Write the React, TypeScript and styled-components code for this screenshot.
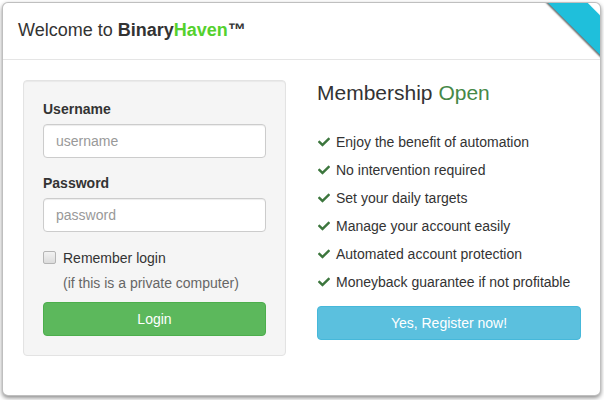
import React from "react";
import styled, { createGlobalStyle } from "styled-components";
import { FaCheck } from "react-icons/fa";

const Global = createGlobalStyle`
  html, body { margin: 0; padding: 0; background: #fff; }
  body { font-family: "Liberation Sans", Arial, sans-serif; font-size: 14px; line-height: 1.42857; color: #333; }
  * { box-sizing: border-box; }
`;

const Page = styled.div`
  padding: 2px 3px 0 2px;
  width: 604px;
  height: 400px;
`;

const Modal = styled.div`
  position: relative;
  width: 599px;
  height: 394px;
  background: #fff;
  border: 1px solid rgba(0, 0, 0, 0.25);
  border-radius: 6px;
  box-shadow: 0 2px 4px rgba(0, 0, 0, 0.45);
`;

const Corner = styled.div`
  position: absolute;
  top: 0;
  right: 0;
  width: 56px;
  height: 56px;
  overflow: hidden;
  border-top-right-radius: 5px;
`;

const Ribbon = styled.div`
  position: absolute;
  left: -10px;
  top: 2px;
  width: 100px;
  height: 28px;
  background: #1fbfdb;
  transform: rotate(45deg);
  box-shadow: 0 1.5px 1.5px rgba(0, 0, 0, 0.55);
`;

const Header = styled.div`
  padding: 15px;
  border-bottom: 1px solid #e5e5e5;
`;

const Title = styled.h4`
  margin: 0;
  font-size: 18px;
  font-weight: normal;
  line-height: 1.42857;
  color: #333;
`;

const Brand = styled.b<{ $green?: boolean }>`
  font-weight: bold;
  color: ${(p) => (p.$green ? "#55d12e" : "#333")};
`;

const Body = styled.div`
  display: grid;
  grid-template-columns: 263px 264px;
  column-gap: 31px;
  align-items: start;
  padding: 20px 19px 20px 20px;
`;

const Well = styled.form`
  background: #f5f5f5;
  border: 1px solid #e3e3e3;
  border-radius: 4px;
  padding: 19px;
  box-shadow: inset 0 1px 1px rgba(0, 0, 0, 0.05);
`;

const Group = styled.div`
  margin-bottom: 16px;
`;

const Label = styled.label`
  display: inline-block;
  margin-bottom: 4px;
  font-weight: bold;
  color: #333;
`;

const Input = styled.input`
  display: block;
  width: 100%;
  height: 34px;
  padding: 6px 12px;
  font-family: inherit;
  font-size: 14px;
  color: #555;
  background: #fff;
  border: 1px solid #ccc;
  border-radius: 4px;
  box-shadow: inset 0 1px 1px rgba(0, 0, 0, 0.075);
  outline: none;
  &::placeholder { color: #999; }
`;

const CheckRow = styled.label`
  display: flex;
  align-items: center;
  gap: 7px;
  color: #333;
  line-height: 20px;
`;

const Box = styled.input`
  appearance: none;
  margin: 0;
  width: 13px;
  height: 13px;
  border: 1px solid #b5b5b5;
  border-radius: 2px;
  background: linear-gradient(#f2f2f2, #dcdcdc);
`;

const Hint = styled.div`
  margin: 5px 0 9px 20px;
  line-height: 20px;
  color: #666;
`;

const Button = styled.button<{ $variant: "success" | "info" }>`
  display: block;
  width: 100%;
  height: 34px;
  padding: 0 12px;
  font-family: inherit;
  font-size: 14px;
  color: #fff;
  border-radius: 4px;
  border: 1px solid ${(p) => (p.$variant === "success" ? "#4cae4c" : "#46b8da")};
  background: ${(p) => (p.$variant === "success" ? "#5cb85c" : "#5bc0de")};
  cursor: pointer;
`;

const Side = styled.div`
  padding-top: 1px;
`;

const Heading = styled.h3`
  margin: 0 0 25px;
  font-size: 21px;
  font-weight: normal;
  line-height: 1.1;
  color: #333;
`;

const Open = styled.span`
  color: #468847;
`;

const List = styled.ul`
  list-style: none;
  margin: 0 0 9px;
  padding: 0;
`;

const Item = styled.li`
  display: flex;
  align-items: center;
  gap: 6px;
  height: 28px;
  padding-left: 1px;
  color: #333;
  svg { color: #3c763d; margin-top: -1px; flex: none; }
`;

const features = [
  "Enjoy the benefit of automation",
  "No intervention required",
  "Set your daily targets",
  "Manage your account easily",
  "Automated account protection",
  "Moneyback guarantee if not profitable",
];

export default function App() {
  return (
    <>
      <Global />
      <Page>
        <Modal>
          <Corner>
            <Ribbon />
          </Corner>
          <Header>
            <Title>
              Welcome to <Brand>Binary</Brand>
              <Brand $green>Haven</Brand>
              <Brand>™</Brand>
            </Title>
          </Header>
          <Body>
            <Well onSubmit={(e) => e.preventDefault()}>
              <Group>
                <Label>Username</Label>
                <Input placeholder="username" />
              </Group>
              <Group>
                <Label>Password</Label>
                <Input type="password" placeholder="password" />
              </Group>
              <CheckRow>
                <Box type="checkbox" />
                Remember login
              </CheckRow>
              <Hint>(if this is a private computer)</Hint>
              <Button $variant="success">Login</Button>
            </Well>
            <Side>
              <Heading>
                Membership <Open>Open</Open>
              </Heading>
              <List>
                {features.map((f) => (
                  <Item key={f}>
                    <FaCheck size={12} />
                    {f}
                  </Item>
                ))}
              </List>
              <Button $variant="info">Yes, Register now!</Button>
            </Side>
          </Body>
        </Modal>
      </Page>
    </>
  );
}
